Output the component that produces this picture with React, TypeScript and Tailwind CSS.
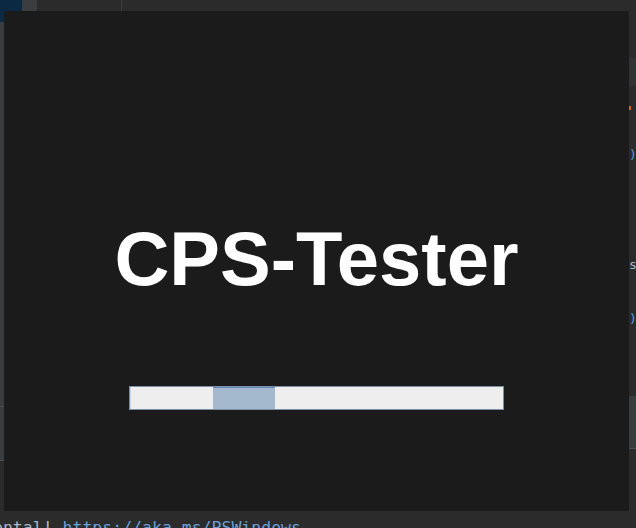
import React from 'react';

function ProgressBar() {
  return (
    <div className="w-[375px] h-[24px] border border-[#7d8fa3] bg-[#eeeeee] flex">
      <div className="w-[1px] bg-[#c4d6ea]" />
      <div className="w-[82px]" />
      <div className="w-[62px] flex flex-col">
        <div className="h-[1px] bg-[#6685c2]" />
        <div className="flex-1 bg-[#a4b9cd]" />
      </div>
    </div>
  );
}

function SplashWindow() {
  return (
    <div className="w-[625px] h-[500px] bg-[#1b1b1b] flex flex-col items-center pt-[210px]">
      <h1 className="text-white font-bold text-[76px] leading-[76px] font-['Liberation_Sans',Arial,sans-serif]">
        CPS-Tester
      </h1>
      <div className="mt-[89px]">
        <ProgressBar />
      </div>
    </div>
  );
}

export default function App() {
  return (
    <div className="w-[636px] h-[528px] overflow-hidden bg-[#2b2b2b] flex flex-col">
      {/* ide top bar */}
      <div className="h-[11px] flex shrink-0">
        <div className="w-[22px] bg-[#0c2944]" />
        <div className="w-[15px] bg-[#3a3d40]" />
        <div className="w-[84px]" />
        <div className="w-[1px] bg-[#3d3d3d]" />
        <div className="flex-1" />
      </div>

      <div className="h-[500px] flex shrink-0">
        {/* left tool strip */}
        <div className="w-[4px] flex flex-col">
          <div className="h-[11px] bg-[#0c2944]" />
          <div className="h-[384px] bg-[#3a3d40]" />
          <div className="h-[1px] bg-[#4b4e51]" />
          <div className="h-[53px] bg-[#3a3d40]" />
          <div className="h-[1px] bg-[#4b4e51]" />
          <div className="flex-1" />
        </div>

        <SplashWindow />

        {/* right edge of the editor */}
        <div className="w-[7px] flex flex-col font-['DejaVu_Sans_Mono',monospace] text-[13px] leading-[14px]">
          <div className="h-[47px]" />
          <div className="h-[28px] bg-[#323334]" />
          <div className="h-[20px]" />
          <div className="h-[4px] w-[2px] bg-[#c8692e]" />
          <div className="h-[38px]" />
          <div className="text-[#5f9ad6]">)</div>
          <div className="h-[96px]" />
          <div className="text-[#a9b7c6]">s</div>
          <div className="h-[40px]" />
          <div className="text-[#5f9ad6]">)</div>
          <div className="h-[70px]" />
          <div className="h-[53px] bg-[#3a3d40] border-b border-[#4b4e51]" />
        </div>
      </div>

      {/* terminal output */}
      <div className="flex-1 overflow-hidden">
        <div className="mt-[7px] ml-[-7px] whitespace-pre font-['DejaVu_Sans_Mono',monospace] text-[16.5px] leading-[20px]">
          <span className="text-[#a9b7c6]">ental! </span>
          <span className="text-[#6a9fd8]">https://aka.ms/PSWindows</span>
        </div>
      </div>
    </div>
  );
}
